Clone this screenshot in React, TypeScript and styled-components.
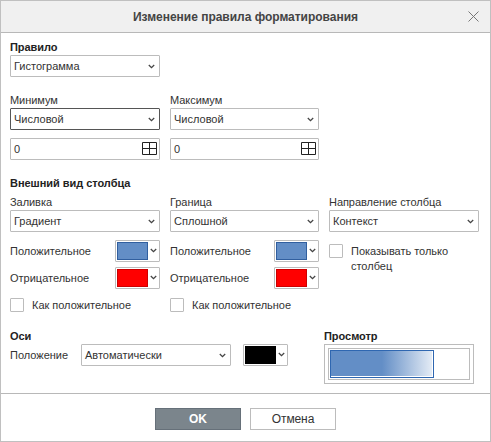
import React from "react";
import styled, { createGlobalStyle } from "styled-components";

const GlobalStyle = createGlobalStyle`
  * { box-sizing: border-box; }
  body { margin: 0; background: #fff; }
`;

const Dialog = styled.div`
  width: 491px;
  height: 442px;
  display: flex;
  flex-direction: column;
  border: 1px solid #c0c0c0;
  background: #fff;
  color: #333;
  font: 11px/14px "Liberation Sans", Arial, sans-serif;
  white-space: nowrap;
`;

const Header = styled.header`
  height: 32px;
  flex: none;
  display: grid;
  grid-template-columns: 34px 1fr 34px;
  align-items: center;
  background: #f0f0f0;
  border-bottom: 1px solid #b8b8b8;
`;

const Title = styled.h1`
  grid-column: 2;
  margin: 0;
  font-size: 12px;
  line-height: 16px;
  font-weight: bold;
  text-align: center;
  letter-spacing: -0.02px;
  color: #444;
`;

const CloseButton = styled.button`
  display: flex;
  justify-content: center;
  padding: 0;
  border: 0;
  background: none;
`;

const Body = styled.main`
  flex: 1;
  padding: 8px 9px 0;
`;

const Columns = styled.div<{ $top?: number }>`
  display: grid;
  grid-template-columns: 150px 149px 150px;
  column-gap: 10px;
  align-items: start;
  margin-top: ${(p) => p.$top ?? 0}px;
`;

const Heading = styled.h2<{ $top?: number; $raised?: boolean }>`
  margin: ${(p) => p.$top ?? 0}px 0 0;
  padding-bottom: ${(p) => (p.$raised ? 2 : 0)}px;
  font-size: 11px;
  line-height: ${(p) => (p.$raised ? 12 : 14)}px;
  font-weight: bold;
  letter-spacing: -0.04px;
  color: #222;
`;

const Label = styled.div`
  line-height: 14px;
`;

const FieldLabel = styled(Label)`
  line-height: 12px;
  padding-bottom: 2px;
  letter-spacing: -0.05px;
`;

const Box = styled.div<{ $active?: boolean }>`
  width: 100%;
  height: 22px;
  display: flex;
  align-items: center;
  justify-content: space-between;
  padding: 0 4px 0 3px;
  border: 1px solid ${(p) => (p.$active ? "#555" : "#bcbcbc")};
  border-radius: 1px;
  background: #fff;
`;

const NumberBox = styled(Box)`
  margin-top: 8px;
  padding-right: 2px;

  svg { margin-bottom: 1px; }
`;

const RuleField = styled.div`
  width: 150px;
`;

const ColorRow = styled.div<{ $top: number }>`
  display: flex;
  align-items: center;
  justify-content: space-between;
  margin-top: ${(p) => p.$top}px;
`;

const ColorBox = styled.div`
  width: 45px;
  height: 22px;
  display: flex;
  align-items: center;
  justify-content: space-between;
  padding: 0 2px 0 1px;
  border: 1px solid #bcbcbc;
  border-radius: 1px;

  svg { margin-bottom: 1px; }
`;

const Swatch = styled.span<{ $fill: string; $edge: string }>`
  width: 31px;
  height: 18px;
  background: ${(p) => p.$fill};
  border: 1px solid ${(p) => p.$edge};
`;

const CheckRow = styled.label<{ $top: number }>`
  display: flex;
  align-items: flex-start;
  gap: 8px;
  margin-top: ${(p) => p.$top}px;
`;

const Check = styled.span`
  flex: none;
  width: 14px;
  height: 14px;
  border: 1px solid #bcbcbc;
  border-radius: 1px;
`;

const CheckText = styled.span`
  line-height: 15px;
  letter-spacing: -0.02px;
`;

const Axes = styled.section`
  display: flex;
  justify-content: space-between;
  margin-top: 17px;
  padding-right: 7px;
`;

const AxisRow = styled.div`
  display: grid;
  grid-template-columns: 71px 150px 45px;
  align-items: center;

  & > :last-child { margin-left: 12px; }
`;

const Preview = styled.div`
  width: 150px;
  height: 40px;
  padding: 3px;
  border: 1px solid #bcbcbc;
`;

const PreviewCell = styled.div`
  width: 142px;
  height: 32px;
  padding: 1px;
  border: 1px solid #bcbcbc;
`;

const PreviewBar = styled.div`
  width: 104px;
  height: 28px;
  border: 1px solid #2f67b1;
  background: linear-gradient(90deg, #638ec6 50%, #e6edf6 100%);
  box-shadow: inset -1px -1px #fff;
`;

const Footer = styled.footer`
  flex: none;
  height: 48px;
  display: flex;
  justify-content: center;
  gap: 9px;
  padding-top: 14px;
  border-top: 1px solid #b8b8b8;
`;

const Button = styled.button<{ $primary?: boolean }>`
  width: 86px;
  height: 22px;
  padding: 0;
  font: ${(p) => (p.$primary ? "bold" : "normal")} 12px/16px "Liberation Sans", Arial, sans-serif;
  letter-spacing: -0.1px;
  color: ${(p) => (p.$primary ? "#fff" : "#333")};
  background: ${(p) => (p.$primary ? "#7b858c" : "#fff")};
  border: 1px solid ${(p) => (p.$primary ? "#667079" : "#bcbcbc")};
`;

const Chevron = () => (
  <svg width="7" height="5" viewBox="0 0 7 5" fill="none">
    <path d="M0.8 1L3.5 3.6L6.2 1" stroke="#444" strokeWidth="1.3" />
  </svg>
);

const GridIcon = () => (
  <svg width="15" height="13" viewBox="0 0 15 13" fill="none" stroke="#222">
    <path d="M0.5 0.5H14.5V12.5H0.5ZM7.5 0.5V12.5M0.5 6.5H14.5" />
  </svg>
);

const Select = ({ value, active }: { value: string; active?: boolean }) => (
  <Box $active={active}>
    <span>{value}</span>
    <Chevron />
  </Box>
);

const NumberInput = () => (
  <NumberBox>
    <span>0</span>
    <GridIcon />
  </NumberBox>
);

const ColorPicker = ({ fill, edge }: { fill: string; edge: string }) => (
  <ColorBox>
    <Swatch $fill={fill} $edge={edge} />
    <Chevron />
  </ColorBox>
);

const BarStyle = ({ label, value }: { label: string; value: string }) => (
  <div>
    <FieldLabel>{label}</FieldLabel>
    <Select value={value} />
    <ColorRow $top={8}>
      <Label>Положительное</Label>
      <ColorPicker fill="#638ec6" edge="#315f9f" />
    </ColorRow>
    <ColorRow $top={5}>
      <Label>Отрицательное</Label>
      <ColorPicker fill="#ff0000" edge="#cc0000" />
    </ColorRow>
    <CheckRow $top={9}>
      <Check />
      <CheckText>Как положительное</CheckText>
    </CheckRow>
  </div>
);

export default function App() {
  return (
    <>
      <GlobalStyle />
      <Dialog>
        <Header>
          <Title>Изменение правила форматирования</Title>
          <CloseButton aria-label="Закрыть">
            <svg width="11" height="11" viewBox="0 0 11 11" stroke="#777" fill="none">
              <path d="M0.5 0.5L10.5 10.5M10.5 0.5L0.5 10.5" />
            </svg>
          </CloseButton>
        </Header>
        <Body>
          <RuleField>
            <Heading $raised>Правило</Heading>
            <Select value="Гистограмма" />
          </RuleField>
          <Columns $top={17}>
            <div>
              <FieldLabel>Минимум</FieldLabel>
              <Select value="Числовой" active />
              <NumberInput />
            </div>
            <div>
              <FieldLabel>Максимум</FieldLabel>
              <Select value="Числовой" />
              <NumberInput />
            </div>
          </Columns>
          <Heading $top={16}>Внешний вид столбца</Heading>
          <Columns $top={6}>
            <BarStyle label="Заливка" value="Градиент" />
            <BarStyle label="Граница" value="Сплошной" />
            <div>
              <FieldLabel>Направление столбца</FieldLabel>
              <Select value="Контекст" />
              <CheckRow $top={12}>
                <Check />
                <CheckText>
                  Показывать только
                  <br />
                  столбец
                </CheckText>
              </CheckRow>
            </div>
          </Columns>
          <Axes>
            <div>
              <Heading $raised>Оси</Heading>
              <AxisRow>
                <Label>Положение</Label>
                <Select value="Автоматически" />
                <ColorPicker fill="#000" edge="#000" />
              </AxisRow>
            </div>
            <div>
              <Heading $raised>Просмотр</Heading>
              <Preview>
                <PreviewCell>
                  <PreviewBar />
                </PreviewCell>
              </Preview>
            </div>
          </Axes>
        </Body>
        <Footer>
          <Button $primary>OK</Button>
          <Button>Отмена</Button>
        </Footer>
      </Dialog>
    </>
  );
}
